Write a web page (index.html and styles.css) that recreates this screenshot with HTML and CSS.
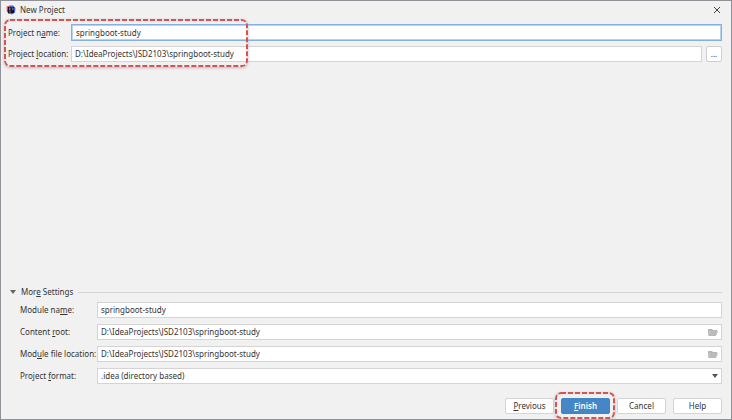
FILE: index.html
```html
<!DOCTYPE html>
<html lang="en">
<head>
<meta charset="utf-8">
<title>New Project</title>
<link rel="stylesheet" href="styles.css">
</head>
<body>
<main class="dialog">
  <header class="titlebar">
    <svg class="logo" viewBox="0 0 20 20" aria-hidden="true">
      <path d="M1 3 8 1l5 5-6 10-5-2z" fill="#f0475c"/>
      <path d="M8 1h6l5 5-1 9-6 4-7-3z" fill="#3f63d8"/>
      <path d="M1 10l6-2 2 9-4 1z" fill="#a03bb5"/>
      <path d="M4 4h12v12H4z" fill="#14101c"/>
      <path d="M6 6h3M7.500 6v4M6 10h3M11 6h3v3q0 1-2 1M6 14h4" fill="none" stroke="#ddd" stroke-width="1"/>
    </svg>
    <h1 class="title">New Project</h1>
    <button class="close" type="button" aria-label="Close">
      <svg viewBox="0 0 8 8"><path d="M1 1l6 6M7 1L1 7" fill="none" stroke="#444" stroke-width="1"/></svg>
    </button>
  </header>

  <form class="form">
    <section class="project">
      <div class="row">
        <label for="name">Project n<u>a</u>me:</label>
        <input class="field focused" id="name" type="text" value="springboot-study">
      </div>
      <div class="row">
        <label for="location">Project <u>l</u>ocation:</label>
        <input class="field" id="location" type="text" value="D:\IdeaProjects\JSD2103\springboot-study">
        <button class="browse" type="button" aria-label="Browse">...</button>
      </div>
      <svg class="callout callout-project" aria-hidden="true"><rect class="dashes"/></svg>
    </section>

    <section class="settings">
      <h2 class="settings-title">
        <svg class="arrow" viewBox="0 0 6 4" aria-hidden="true"><path d="M0 0h6L3 4z" fill="#666"/></svg>
        <span>Mor<u>e</u> Settings</span>
      </h2>
      <div class="row">
        <label for="module">Module na<u>m</u>e:</label>
        <input class="field" id="module" type="text" value="springboot-study">
      </div>
      <div class="row">
        <label for="root">Content <u>r</u>oot:</label>
        <div class="field-wrap">
          <input class="field" id="root" type="text" value="D:\IdeaProjects\JSD2103\springboot-study">
          <svg class="folder" viewBox="0 0 10 8" aria-hidden="true"><path d="M0 7V1h4l1 1h4v1H2z" fill="#b4b7b4"/><path d="M2 3h8L8 8H0z" fill="#b9bcb9"/></svg>
        </div>
      </div>
      <div class="row">
        <label for="file">Mod<u>u</u>le file location:</label>
        <div class="field-wrap">
          <input class="field" id="file" type="text" value="D:\IdeaProjects\JSD2103\springboot-study">
          <svg class="folder" viewBox="0 0 10 8" aria-hidden="true"><path d="M0 7V1h4l1 1h4v1H2z" fill="#b4b7b4"/><path d="M2 3h8L8 8H0z" fill="#b9bcb9"/></svg>
        </div>
      </div>
      <div class="row">
        <label for="format">Project <u>f</u>ormat:</label>
        <div class="field-wrap">
          <select class="field" id="format"><option>.idea (directory based)</option></select>
          <svg class="arrow select-arrow" viewBox="0 0 6 4" aria-hidden="true"><path d="M0 0h6L3 4z" fill="#555"/></svg>
        </div>
      </div>
    </section>

    <footer class="actions">
      <button class="button" type="button"><u>P</u>revious</button>
      <div class="finish">
        <button class="button primary" type="button"><u>F</u>inish</button>
        <svg class="callout callout-finish" aria-hidden="true"><rect class="dashes"/></svg>
      </div>
      <button class="button" type="button">Cancel</button>
      <button class="button" type="button">Help</button>
    </footer>
  </form>
</main>
</body>
</html>
```
FILE: styles.css
```css
* {
  box-sizing: border-box;
}

body {
  margin: 0;
  font: 8px/12px "Noto Sans", "Open Sans", sans-serif;
  color: #333;
  background: #f1f1f1;
}

button,
input,
select {
  margin: 0;
  font: inherit;
  color: inherit;
}

u {
  text-underline-offset: 1px;
  text-decoration-thickness: 1px;
}

.dialog {
  display: flex;
  flex-direction: column;
  min-height: 100vh;
  border: 1px solid #909298;
}

.titlebar {
  display: flex;
  align-items: center;
  gap: 4px;
  height: 17px;
  padding: 0 10px 0 5px;
}

.logo {
  width: 10px;
  height: 10px;
}

.title {
  flex: 1;
  margin: 0;
  font-size: 8px;
  font-weight: 400;
}

.close {
  display: flex;
  padding: 0;
  border: 0;
  background: none;
}

.close svg {
  width: 8px;
  height: 8px;
}

.form {
  flex: 1;
  display: flex;
  flex-direction: column;
  padding: 6px 9px 5px 7px;
}

.project {
  position: relative;
  display: grid;
  gap: 5px;
}

.row {
  display: flex;
  align-items: center;
}

.row label {
  flex: none;
  width: 63px;
  white-space: nowrap;
}

.field {
  display: block;
  flex: 1;
  min-width: 0;
  width: 100%;
  height: 16px;
  padding: 0 3px 1px;
  border: 1px solid #d4d4d4;
  border-radius: 0;
  outline: 0;
  background: #fff;
}

.focused {
  height: 17px;
  padding-left: 4px;
  border-color: #83b1e0;
  box-shadow: inset 0 0 0 1px #b5d2f0;
}

.field-wrap {
  position: relative;
  flex: 1;
}

.browse {
  width: 16px;
  height: 16px;
  margin-left: 4px;
  padding: 0;
  border: 1px solid #cfcfcf;
  border-radius: 2px;
  background: #fff;
}

.settings {
  display: grid;
  gap: 6px;
  margin-top: auto;
}

.settings-title {
  display: flex;
  align-items: center;
  gap: 5px;
  margin: 0 0 -2px 2px;
  font-size: 8px;
  font-weight: 400;
}

.settings-title::after {
  content: "";
  flex: 1;
  height: 1px;
  background: #d4d4d4;
}

.arrow {
  width: 6px;
  height: 4px;
}

.settings .row label {
  width: 89px;
  padding-left: 12px;
}

select.field {
  appearance: none;
}

.folder {
  position: absolute;
  top: 4px;
  right: 4px;
  width: 10px;
  height: 8px;
}

.select-arrow {
  position: absolute;
  top: 6px;
  right: 4px;
}

.actions {
  display: flex;
  justify-content: flex-end;
  gap: 7px;
  margin-top: 14px;
}

.button {
  display: block;
  width: 49px;
  height: 16px;
  padding: 0;
  border: 1px solid #d4d4d4;
  border-radius: 2px;
  background: #fff;
}

.primary {
  border-color: #4084c5;
  background: #4586c7;
  color: #fff;
  font-weight: 600;
}

.finish {
  position: relative;
}

.callout {
  position: absolute;
  border-radius: 6px;
  box-shadow: 0 1px 3px #bbb, inset 0 1px 3px #ccc;
  pointer-events: none;
}

.dashes {
  x: 1px;
  y: 1px;
  width: calc(100% - 2px);
  height: calc(100% - 2px);
  rx: 5px;
  fill: none;
  stroke: #d65353;
  stroke-width: 2px;
  stroke-dasharray: 5px 2px;
}

.callout-project {
  top: -5px;
  left: -4px;
  width: 244px;
  height: 48px;
}

.callout-finish {
  top: -6px;
  left: -6px;
  width: 60px;
  height: 27px;
}
```
